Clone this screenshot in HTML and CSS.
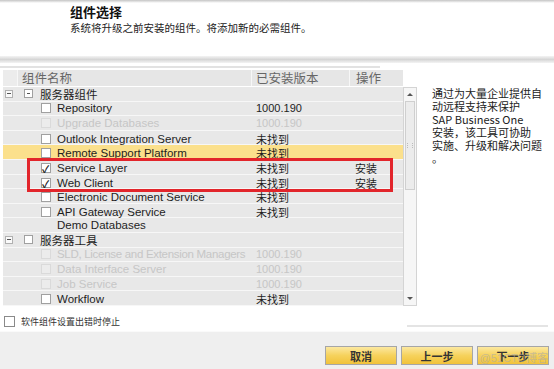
FILE: index.html
```html
<!DOCTYPE html>
<html lang="zh-CN">
<head>
    <meta charset="UTF-8">
    <title>组件选择</title>
    <link rel="stylesheet" href="styles.css">
</head>
<body>
    <div class="top-strip"></div>

    <header class="intro">
        <h1>组件选择</h1>
        <p>系统将升级之前安装的组件。将添加新的必需组件。</p>
    </header>

    <div class="band"></div>
    <div class="thin-line"></div>

    <main class="content">
        <section class="grid">
            <div class="grid-head">
                <div class="hc hc-tree"></div>
                <div class="hc hc-name">组件名称</div>
                <div class="hc hc-ver">已安装版本</div>
                <div class="hc hc-act">操作</div>
            </div>

            <div class="grid-body">
                <div class="rows">
                    <div class="row group">
                        <div class="cell-name"><span class="tog"></span><span class="cb mixed"></span><span>服务器组件</span></div>
                        <div></div><div></div>
                    </div>
                    <div class="row item">
                        <div class="cell-name"><span class="cb"></span><span>Repository</span></div>
                        <div class="cell-ver">1000.190</div><div></div>
                    </div>
                    <div class="row item off">
                        <div class="cell-name"><span class="cb"></span><span>Upgrade Databases</span></div>
                        <div class="cell-ver">1000.190</div><div></div>
                    </div>
                    <div class="row item">
                        <div class="cell-name"><span class="cb"></span><span>Outlook Integration Server</span></div>
                        <div class="cell-ver">未找到</div><div></div>
                    </div>
                    <div class="row item hot">
                        <div class="cell-name"><span class="cb"></span><span>Remote Support Platform</span></div>
                        <div class="cell-ver">未找到</div><div></div>
                    </div>
                    <div class="row item">
                        <div class="cell-name"><span class="cb on"></span><span>Service Layer</span></div>
                        <div class="cell-ver">未找到</div><div class="cell-act">安装</div>
                    </div>
                    <div class="row item">
                        <div class="cell-name"><span class="cb on"></span><span>Web Client</span></div>
                        <div class="cell-ver">未找到</div><div class="cell-act">安装</div>
                    </div>
                    <div class="row item">
                        <div class="cell-name"><span class="cb"></span><span>Electronic Document Service</span></div>
                        <div class="cell-ver">未找到</div><div></div>
                    </div>
                    <div class="row item">
                        <div class="cell-name"><span class="cb"></span><span>API Gateway Service</span></div>
                        <div class="cell-ver">未找到</div><div></div>
                    </div>
                    <div class="row item">
                        <div class="cell-name"><span class="cb blank"></span><span>Demo Databases</span></div>
                        <div></div><div></div>
                    </div>
                    <div class="row group">
                        <div class="cell-name"><span class="tog"></span><span class="cb"></span><span>服务器工具</span></div>
                        <div></div><div></div>
                    </div>
                    <div class="row item off">
                        <div class="cell-name"><span class="cb"></span><span class="tight">SLD, License and Extension Managers</span></div>
                        <div class="cell-ver">1000.190</div><div></div>
                    </div>
                    <div class="row item off">
                        <div class="cell-name"><span class="cb"></span><span>Data Interface Server</span></div>
                        <div class="cell-ver">1000.190</div><div></div>
                    </div>
                    <div class="row item off">
                        <div class="cell-name"><span class="cb"></span><span>Job Service</span></div>
                        <div class="cell-ver">1000.190</div><div></div>
                    </div>
                    <div class="row item">
                        <div class="cell-name"><span class="cb"></span><span>Workflow</span></div>
                        <div class="cell-ver">未找到</div><div></div>
                    </div>
                </div>

                <div class="scrollbar">
                    <div class="arrow up"></div>
                    <div class="thumb"><span class="grip"></span></div>
                    <div class="track"></div>
                    <div class="arrow down"></div>
                </div>
            </div>

            <div class="mark"></div>
        </section>

        <aside class="desc">
            通过为大量企业提供自<br>
            动远程支持来保护<br>
            SAP Business One<br>
            安装，该工具可协助<br>
            实施、升级和解决问题<br>
            。
        </aside>
    </main>

    <div class="option">
        <span class="cb-box"></span>
        <span>软件组件设置出错时停止</span>
    </div>

    <footer class="footer">
        <button class="btn">取消</button>
        <button class="btn">上一步</button>
        <button class="btn">下一步</button>
        <span class="watermark">@51CTO博客</span>
    </footer>
</body>
</html>
```

FILE: styles.css
```css
body {
    margin: 0;
    width: 554px;
    height: 369px;
    overflow: hidden;
    background: #fff;
    color: #222;
    font-family: 'Liberation Sans', 'Noto Sans CJK SC', sans-serif;
}

.top-strip {
    height: 3px;
    background: linear-gradient(#c4c4c4, #fff);
}

.intro {
    display: flex;
    flex-direction: column;
    gap: 3px;
    height: 53px;
    padding: 2px 0 0 70px;
    box-sizing: border-box;
    font-family: 'Noto Sans CJK SC', sans-serif;
}

.intro h1 {
    margin: 0;
    font-size: 13px;
    line-height: 14px;
    font-weight: bold;
    color: #111;
}

.intro p {
    margin: 0;
    font-size: 10.5px;
    line-height: 12px;
}

.band {
    height: 7px;
    background: linear-gradient(#f4f4f4, #d6d6d6 50%, #f4f4f4);
}

.thin-line {
    width: 380px;
    height: 2px;
    margin: 3px 0 2px;
    background: #e2e2e2;
}

.content {
    display: flex;
    align-items: flex-start;
    padding-left: 3px;
}

.grid {
    position: relative;
    width: 415px;
}

.grid-head {
    display: flex;
    width: 400px;
    height: 16px;
    background: #e6e6e6;
    font-family: 'Noto Sans CJK SC', sans-serif;
    font-size: 12.5px;
    line-height: 16px;
    color: #666;
}

.hc {
    box-sizing: border-box;
    border-right: 1px solid #f7f7f7;
}

.hc-tree {
    width: 15px;
    background: #ececec;
}

.hc-name {
    width: 234px;
    padding-left: 4px;
}

.hc-ver {
    width: 98px;
    padding-left: 4px;
}

.hc-act {
    width: 53px;
    padding-left: 6px;
    border-right: none;
}

.grid-body {
    display: flex;
    margin-top: 1px;
}

.rows {
    width: 400px;
}

.row {
    display: grid;
    grid-template-columns: 249px 98px 53px;
    align-items: center;
    height: 14.6px;
    box-sizing: border-box;
    border-bottom: 1px solid #f7f7f7;
    background: #e8e8e8;
    font-size: 11.5px;
    color: #1e1e1e;
}

.row.hot {
    background: #fbe08c;
}

.row.off {
    color: #c6c6c6;
}

.cell-name {
    display: flex;
    align-items: center;
    white-space: nowrap;
    overflow: hidden;
}

.tight {
    letter-spacing: -0.3px;
}

.row.item .cell-name {
    padding-left: 38px;
}

.row.group .cell-name {
    padding-left: 2px;
    font-family: 'Noto Sans CJK SC', sans-serif;
    font-size: 11.5px;
}

.cell-ver {
    padding-left: 4px;
    font-size: 11px;
}

.cell-act {
    padding-left: 5px;
    font-family: 'Noto Sans CJK SC', sans-serif;
    font-size: 11px;
}

.cb {
    position: relative;
    width: 10px;
    height: 10px;
    margin-right: 6px;
    box-sizing: border-box;
    border: 1px solid #a0a0a0;
    background: #fff;
    flex-shrink: 0;
}

.row.off .cb {
    border-color: #dadada;
    background: #ececec;
}

.cb.blank {
    visibility: hidden;
}

.cb.on::after {
    content: '✓';
    position: absolute;
    left: 0;
    top: -3px;
    font-size: 10px;
    font-weight: bold;
    color: #222;
}

.tog {
    position: relative;
    width: 8px;
    height: 8px;
    margin-right: 11px;
    box-sizing: border-box;
    border: 1px solid #b0b0b0;
    background: #fafafa;
}

.tog::after,
.cb.mixed::after {
    content: '';
    position: absolute;
    left: 1px;
    right: 1px;
    top: 50%;
    height: 1px;
    margin-top: -0.5px;
    background: #555;
}

.cb.mixed::after {
    left: 2px;
    right: 2px;
}

.row.group .cb {
    width: 9px;
    height: 9px;
    margin-right: 7px;
}

.scrollbar {
    display: flex;
    flex-direction: column;
    width: 14px;
    height: 219px;
    box-sizing: border-box;
    border: 1px solid #d4d4d4;
    background: #f6f6f6;
}

.arrow {
    position: relative;
    height: 13px;
}

.arrow::after {
    content: '';
    position: absolute;
    left: 3px;
    top: 5px;
    border-left: 3px solid transparent;
    border-right: 3px solid transparent;
}

.arrow.up::after {
    border-bottom: 3px solid #555;
}

.arrow.down::after {
    border-top: 3px solid #555;
}

.thumb {
    display: flex;
    align-items: center;
    justify-content: center;
    height: 89px;
    margin: 0 1px;
    box-sizing: border-box;
    border: 1px solid #cfcfcf;
    background: #ececec;
}

.grip {
    width: 4px;
    height: 5px;
    border-left: 1px dotted #bbb;
    border-right: 1px dotted #bbb;
}

.track {
    flex: 1;
}

.mark {
    position: absolute;
    left: 24px;
    top: 88px;
    width: 366px;
    height: 34px;
    box-sizing: border-box;
    border: 3px solid #e2252b;
}

.desc {
    margin: 17px 0 0 14px;
    white-space: nowrap;
    font-family: 'Noto Sans CJK SC', sans-serif;
    font-size: 11px;
    line-height: 13px;
    color: #222;
}

.option {
    display: flex;
    align-items: center;
    gap: 6px;
    height: 11px;
    margin-top: 10px;
    padding-left: 4px;
    font-family: 'Noto Sans CJK SC', sans-serif;
    font-size: 9px;
    color: #333;
}

.cb-box {
    width: 11px;
    height: 11px;
    box-sizing: border-box;
    border: 1px solid #8a8a8a;
    background: #fff;
}

.footer {
    position: relative;
    display: flex;
    justify-content: flex-end;
    gap: 4px;
    height: 38px;
    margin-top: 4px;
    padding: 14px 5px 0 0;
    box-sizing: border-box;
    border-top: 1px solid #fafafa;
    background: #efefef;
}

.footer::before {
    content: '';
    position: absolute;
    right: 6px;
    top: -7px;
    width: 141px;
    height: 2px;
    background: #e4e4e4;
}

.btn {
    width: 72px;
    height: 19px;
    padding: 0;
    border: 1px solid #a6a6a6;
    background: linear-gradient(#fce8a0, #f6d25c 50%, #f1c23a);
    font-family: 'Noto Sans CJK SC', sans-serif;
    font-size: 11px;
    font-weight: bold;
    color: #333;
}

.watermark {
    position: absolute;
    right: 6px;
    top: 17px;
    font-family: 'Liberation Sans', 'Noto Sans CJK SC', sans-serif;
    font-size: 11px;
    color: rgba(170, 170, 170, 0.6);
}
```
